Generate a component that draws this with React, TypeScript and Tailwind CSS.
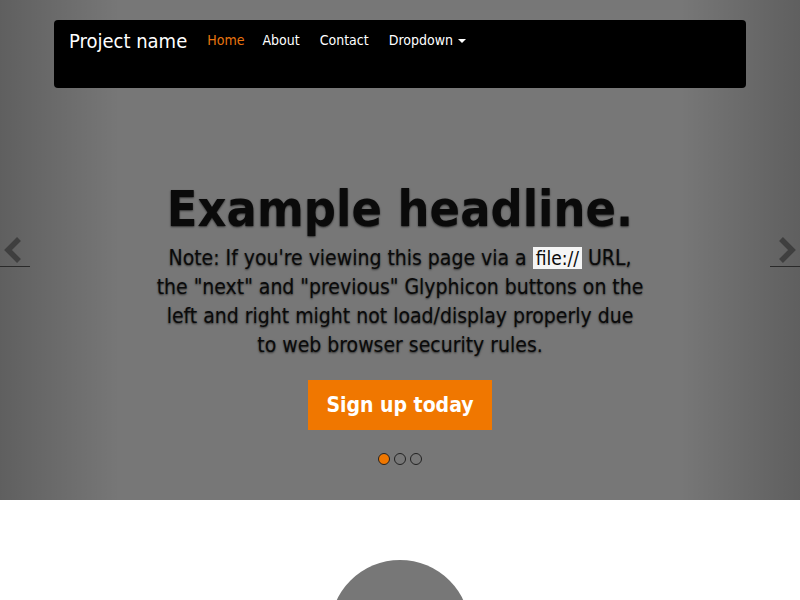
import { useState } from "react";

// ─── Carousel Control ──────────────────────────────────────────────────────

function Control({ side }: { side: "left" | "right" }) {
  const isLeft = side === "left";
  return (
    <a
      href="#"
      className={`absolute top-0 bottom-0 w-[120px] ${
        isLeft
          ? "left-0 bg-gradient-to-r from-black/20 to-transparent"
          : "right-0 bg-gradient-to-l from-black/20 to-transparent"
      }`}
    >
      <svg
        width="20"
        height="26"
        viewBox="0 0 20 26"
        className={`absolute top-[237px] ${isLeft ? "left-[4px]" : "right-[4px]"}`}
        style={{ filter: "blur(0.4px)" }}
      >
        <path
          d={isLeft ? "M15 2 L4 13 L15 24" : "M5 2 L16 13 L5 24"}
          fill="none"
          stroke="#3f3f3f"
          strokeWidth="5.5"
        />
      </svg>
      <span className={`absolute top-[266px] h-px w-[30px] bg-[#2a2a2a] ${isLeft ? "left-0" : "right-0"}`} />
    </a>
  );
}

// ─── Page ──────────────────────────────────────────────────────────────────

export default function App() {
  const [active, setActive] = useState(0);
  const font = "font-['DejaVu_Sans_Condensed','DejaVu_Sans',sans-serif]";

  return (
    <div className={`min-h-[600px] bg-white ${font}`}>
      {/* Carousel */}
      <div className="relative h-[500px] bg-[#777777] overflow-hidden">
        <Control side="left" />
        <Control side="right" />

        {/* Navbar */}
        <div className="absolute top-[20px] left-[54px] right-[54px] h-[68px] rounded-[4px] bg-black">
          <div className="flex items-start">
            <a href="#" className="pl-[15px] pr-[20px] pt-[10px] text-[20px] leading-[22px] text-white">Project name</a>
            <ul className="flex text-[14px] leading-[20px] text-white">
              <li><a href="#" className="block pt-[10px] pr-[18px] text-[#e8740f]">Home</a></li>
              <li><a href="#" className="block pt-[10px] pr-[20px]">About</a></li>
              <li><a href="#" className="block pt-[10px] pr-[20px]">Contact</a></li>
              <li>
                <a href="#" className="flex items-center gap-[5px] pt-[10px]">
                  Dropdown
                  <span className="mt-[2px] h-0 w-0 border-x-[4px] border-t-[4px] border-x-transparent border-t-white" />
                </a>
              </li>
            </ul>
          </div>
        </div>

        {/* Caption */}
        <div className="flex flex-col items-center pt-[179px] text-center text-[#0a0a0a] [text-shadow:0_1px_2px_rgba(0,0,0,0.6)]">
          <h1 className="text-[50px] leading-[60px] font-bold">Example headline.</h1>
          <p className="mt-[5px] w-[488px] text-[21px] leading-[29px]">
            Note: If you're viewing this page via a{" "}
            <span className="bg-[#f5f5f5] px-[3px] text-[19px] [text-shadow:none]">file://</span>{" "}
            URL, the "next" and "previous" Glyphicon buttons on the left and right might not load/display properly due to web
            browser security rules.
          </p>
          <a href="#" className="mt-[20px] bg-[#f07700] px-[18px] py-[10px] text-[21px] leading-[30px] font-bold text-white [text-shadow:none]">
            Sign up today
          </a>
          <ol className="mt-[23px] flex gap-[4px]">
            {[0, 1, 2].map((i) => (
              <li
                key={i}
                onClick={() => setActive(i)}
                className={`h-[12px] w-[12px] rounded-full border border-[#222222] ${i === active ? "bg-[#f07700]" : "bg-transparent"}`}
              />
            ))}
          </ol>
        </div>
      </div>

      {/* Marketing */}
      <div className="flex justify-center pt-[60px]">
        <div className="h-[140px] w-[140px] rounded-full bg-[#777777]" />
      </div>
    </div>
  );
}
